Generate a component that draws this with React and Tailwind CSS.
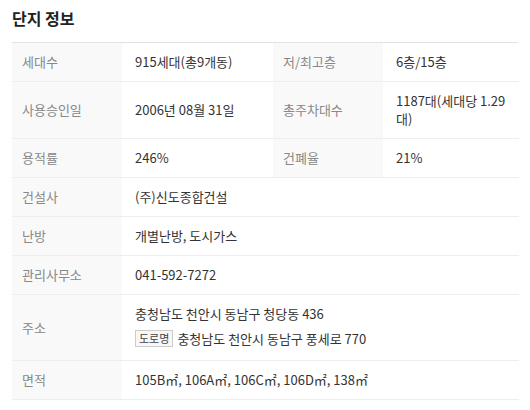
import React from 'react';

const rows = [
  { cells: [['세대수', '915세대(총9개동)'], ['저/최고층', '6층/15층']] },
  { cells: [['사용승인일', '2006년 08월 31일'], ['총주차대수', '1187대(세대당 1.29대)']] },
  { cells: [['용적률', '246%'], ['건폐율', '21%']] },
  { cells: [['건설사', '(주)신도종합건설']] },
  { cells: [['난방', '개별난방, 도시가스']] },
  { cells: [['관리사무소', '041-592-7272']] },
  { address: true },
  { cells: [['면적', '105B㎡, 106A㎡, 106C㎡, 106D㎡, 138㎡']] },
];

const Label = ({ children }) => (
  <div className="flex items-center bg-[#f9f9f9] px-[10px] py-[10px] text-[#888] border-b border-[#eeeeee]">
    {children}
  </div>
);

const Value = ({ children, wide }) => (
  <div
    className={
      'flex items-center pl-[13px] pr-[8px] py-[10px] text-[#333] border-b border-[#eeeeee] ' +
      (wide ? 'col-span-3' : '')
    }
  >
    {children}
  </div>
);

export default function App() {
  return (
    <div
      className="w-[530px] h-[410px] bg-white px-[12px] pt-[6px]"
      style={{ fontFamily: '"Noto Sans CJK KR", "Noto Sans", sans-serif' }}
    >
      <h2 className="text-[16px] font-bold text-[#222] leading-[24px]">단지 정보</h2>

      <div className="mt-[12px] grid grid-cols-[110px_151px_110px_136px] border-t border-[#e2e2e2] text-[13px] leading-[18px]">
        {rows.map((row, i) => {
          if (row.address) {
            return (
              <React.Fragment key={i}>
                <Label>주소</Label>
                <Value wide>
                  <div className="flex flex-col gap-[4px]">
                    <span>충청남도 천안시 동남구 청당동 436</span>
                    <span className="flex h-[23px] items-center gap-[4px]">
                      <span className="border border-[#cccccc] bg-[#f7f7f7] px-[3px] text-[11px] leading-[15px] text-[#444]">
                        도로명
                      </span>
                      충청남도 천안시 동남구 풍세로 770
                    </span>
                  </div>
                </Value>
              </React.Fragment>
            );
          }
          const wide = row.cells.length === 1;
          return (
            <React.Fragment key={i}>
              {row.cells.map(([l, v]) => (
                <React.Fragment key={l}>
                  <Label>{l}</Label>
                  <Value wide={wide}>{v}</Value>
                </React.Fragment>
              ))}
            </React.Fragment>
          );
        })}
      </div>
    </div>
  );
}
